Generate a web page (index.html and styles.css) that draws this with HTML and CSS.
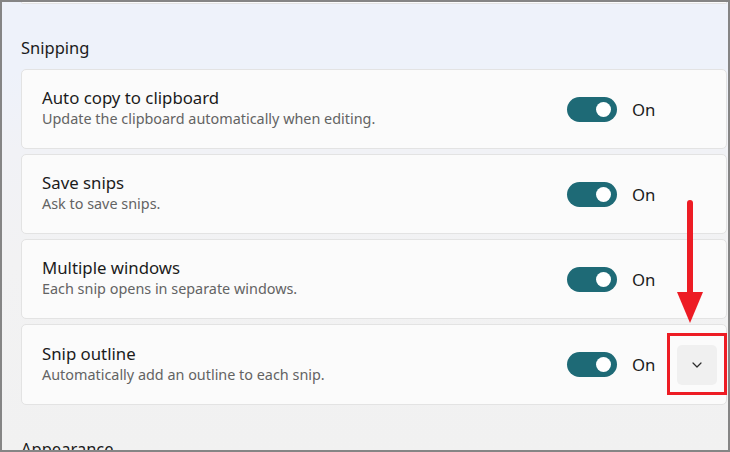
FILE: index.html
```html
<!DOCTYPE html>
<html lang="en">
<head>
    <meta charset="UTF-8">
    <title>Snipping settings</title>
    <link rel="stylesheet" href="styles.css">
</head>
<body>
    <div class="window">
        <div class="content">
            <div class="card card-prev"></div>

            <h2 class="group-title">Snipping</h2>

            <div class="card-list">
                <div class="card">
                    <div class="card-text">
                        <div class="card-title">Auto copy to clipboard</div>
                        <div class="card-desc">Update the clipboard automatically when editing.</div>
                    </div>
                    <div class="toggle-wrap">
                        <div class="toggle"><span class="knob"></span></div>
                        <span class="toggle-label">On</span>
                    </div>
                    <div class="expand-spacer"></div>
                </div>

                <div class="card">
                    <div class="card-text">
                        <div class="card-title">Save snips</div>
                        <div class="card-desc">Ask to save snips.</div>
                    </div>
                    <div class="toggle-wrap">
                        <div class="toggle"><span class="knob"></span></div>
                        <span class="toggle-label">On</span>
                    </div>
                    <div class="expand-spacer"></div>
                </div>

                <div class="card">
                    <div class="card-text">
                        <div class="card-title">Multiple windows</div>
                        <div class="card-desc">Each snip opens in separate windows.</div>
                    </div>
                    <div class="toggle-wrap">
                        <div class="toggle"><span class="knob"></span></div>
                        <span class="toggle-label">On</span>
                    </div>
                    <div class="expand-spacer"></div>
                </div>

                <div class="card card-last">
                    <div class="card-text">
                        <div class="card-title">Snip outline</div>
                        <div class="card-desc">Automatically add an outline to each snip.</div>
                    </div>
                    <div class="toggle-wrap">
                        <div class="toggle"><span class="knob"></span></div>
                        <span class="toggle-label">On</span>
                    </div>
                    <button class="expand-btn">
                        <svg width="10" height="6" viewBox="0 0 10 6">
                            <path d="M1 1 L5 5 L9 1" fill="none" stroke="#2b2b2b" stroke-width="1.2" stroke-linecap="round" stroke-linejoin="round"/>
                        </svg>
                    </button>
                </div>
            </div>

            <h2 class="group-title group-title-next">Appearance</h2>
        </div>

        <!-- annotation -->
        <svg class="arrow" width="30" height="126" viewBox="0 0 30 126">
            <line x1="13" y1="3" x2="13" y2="94" stroke="#ed1c24" stroke-width="6" stroke-linecap="round"/>
            <polygon points="0,92 26,92 13,123" fill="#ed1c24"/>
        </svg>
        <div class="highlight-box"></div>
    </div>
</body>
</html>
```

FILE: styles.css
```css
* {
    box-sizing: border-box;
}

body {
    margin: 0;
    padding: 0;
    font-family: 'Segoe UI', 'Noto Sans', sans-serif;
    color: #1b1b1b;
}

.window {
    position: relative;
    width: 730px;
    height: 452px;
    overflow: hidden;
    border: 2px solid #858585;
    background: linear-gradient(to bottom, #eef2fa 0, #eef2fa 70px, #f1f2f6 150px, #f2f2f3 260px, #f1f1f1 100%);
}

.content {
    padding: 0 1px 0 19px;
}

.card {
    display: flex;
    align-items: center;
    height: 80px;
    padding: 0 9px 0 20px;
    background-color: #fbfbfb;
    border: 1px solid #e3e3e3;
    border-radius: 5px;
}

.card-last {
    height: 81px;
}

.card-prev {
    height: 2px;
    border-top: none;
    border-radius: 0 0 5px 5px;
}

.group-title {
    margin: 0;
    padding: 32px 0 9px 0;
    font-size: 16.5px;
    font-weight: 400;
    line-height: 24px;
}

.group-title-next {
    padding-top: 32px;
}

.card-list {
    display: flex;
    flex-direction: column;
    gap: 5px;
}

.card-text {
    flex: 1;
    padding-bottom: 2px;
}

.card-title {
    font-size: 16.8px;
    line-height: 22px;
}

.card-desc {
    font-size: 14.4px;
    line-height: 20px;
    color: #636363;
}

.toggle-wrap {
    display: flex;
    align-items: center;
    width: 110px;
}

.toggle {
    position: relative;
    width: 50px;
    height: 25px;
    border-radius: 13px;
    background-color: #1e6a76;
}

.knob {
    position: absolute;
    top: 5px;
    right: 6px;
    width: 15px;
    height: 15px;
    border-radius: 50%;
    background-color: #fff;
}

.toggle-label {
    margin-left: 15px;
    font-size: 16.8px;
}

.expand-spacer {
    width: 40px;
}

.expand-btn {
    display: flex;
    justify-content: center;
    align-items: center;
    width: 40px;
    height: 40px;
    padding: 0;
    border: none;
    border-radius: 5px;
    background-color: #f0f0f0;
}

.arrow {
    position: absolute;
    top: 198px;
    left: 675px;
}

.highlight-box {
    position: absolute;
    top: 331px;
    left: 665px;
    width: 60px;
    height: 62px;
    border: 3px solid #ed1c24;
}
```
